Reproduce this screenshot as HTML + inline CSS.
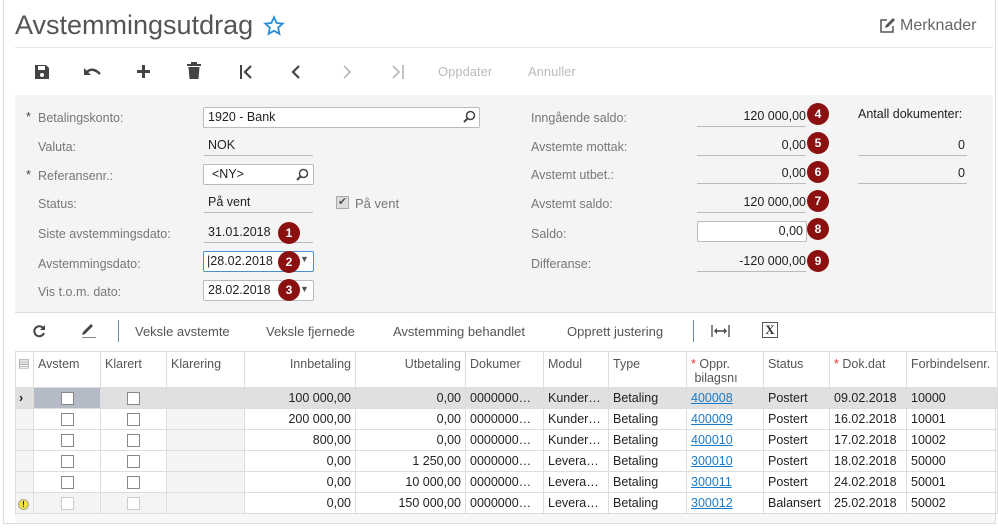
<!DOCTYPE html>
<html><head><meta charset="utf-8"><style>
*{box-sizing:border-box;margin:0;padding:0}
body{width:998px;height:528px;background:#fff;font-family:"Liberation Sans",sans-serif;font-size:12.5px;color:#222;position:relative;overflow:hidden}
.a{position:absolute;white-space:nowrap}
.lbl{color:#777;font-size:12.5px}
.val{border-bottom:1px solid #bbb;height:20px;line-height:18px}
.inp{background:#fff;border:1px solid #bbb;border-radius:2px;height:21px;line-height:19px;padding-left:4px}
.b{width:22px;height:22px;border-radius:50%;background:#8b1010;color:#fff;font-weight:bold;font-size:12px;text-align:center;line-height:22px}
.dis{color:#bbb}
table{border-collapse:collapse;position:absolute;left:15px;top:351px;width:982px;table-layout:fixed}
td,th{border:1px solid #ddd;height:21px;padding:0 4px;font-size:12.5px;white-space:nowrap;overflow:hidden}
th{font-weight:normal;color:#555;text-align:left;vertical-align:top;height:36px;padding-top:5px;line-height:14px}
td.r,th.r{text-align:right}
.cb{display:inline-block;width:13px;height:13px;border:1px solid #888;background:#fff;vertical-align:middle}
.cbd{border-color:#ccc}
.lnk{color:#1a7bc9;text-decoration:underline}
tr.sel td{background:#e0e0e0}
.req{color:#e33}
.nav{position:absolute;font-size:17px;font-family:"DejaVu Sans",sans-serif;top:61px}
</style></head><body>
<div class="a" style="left:3px;top:0;width:1px;height:524px;background:#ddd"></div>
<div class="a" style="left:995px;top:0;width:1px;height:524px;background:#ddd"></div>
<div class="a" style="left:3px;top:523px;width:993px;height:1px;background:#ddd"></div>

<div class="a" style="left:15px;top:10px;font-size:27px;color:#555;font-family:'Liberation Sans',sans-serif">Avstemmingsutdrag</div>
<svg class="a" style="left:263px;top:15px" width="22" height="22" viewBox="0 0 24 24"><path d="M12 2.5l2.9 6.2 6.6.7-5 4.5 1.4 6.6L12 17.2l-5.9 3.3 1.4-6.6-5-4.5 6.6-.7z" fill="none" stroke="#2a8fd8" stroke-width="2"/></svg>
<svg class="a" style="left:878px;top:17px" width="18" height="18" viewBox="0 0 18 18"><path d="M9 3H3v12h12V9" fill="none" stroke="#555" stroke-width="1.5"/><path d="M7 11l1-3 7-7 2 2-7 7z" fill="#555"/></svg>
<div class="a" style="left:900px;top:17px;font-size:16px;color:#666">Merknader</div>
<div class="a" style="left:15px;top:47px;width:978px;height:1px;background:#e6e6e6"></div>

<!-- toolbar -->
<svg class="a" style="left:34px;top:64px" width="16" height="16" viewBox="0 0 16 16"><path d="M1 1h11l3 3v11H1z" fill="#444"/><rect x="4" y="2" width="7" height="4" fill="#fff"/><circle cx="8" cy="11" r="2" fill="#fff"/></svg>
<svg class="a" style="left:84px;top:65px" width="18" height="14" viewBox="0 0 18 14"><path d="M2 8 Q8 1 16 9" fill="none" stroke="#444" stroke-width="2.4"/><path d="M0 3v7h7z" fill="#444"/></svg>
<svg class="a" style="left:136px;top:64px" width="15" height="15" viewBox="0 0 15 15"><path d="M7.5 1v13M1 7.5h13" stroke="#444" stroke-width="3"/></svg>
<svg class="a" style="left:186px;top:62px" width="16" height="18" viewBox="0 0 16 18"><rect x="1" y="2" width="14" height="2" fill="#444"/><rect x="5" y="0" width="6" height="2" fill="#444"/><path d="M2.5 5h11l-1 12h-9z" fill="#444"/></svg>
<svg class="a" style="left:239px;top:64px" width="14" height="16" viewBox="0 0 14 16"><path d="M2 1v14" stroke="#444" stroke-width="2"/><path d="M12 2L6 8l6 6" fill="none" stroke="#444" stroke-width="2.2"/></svg>
<svg class="a" style="left:291px;top:64px" width="10" height="16" viewBox="0 0 10 16"><path d="M8 2L2 8l6 6" fill="none" stroke="#444" stroke-width="2.2"/></svg>
<svg class="a" style="left:342px;top:64px" width="10" height="16" viewBox="0 0 10 16"><path d="M2 2l6 6-6 6" fill="none" stroke="#bbb" stroke-width="1.8"/></svg>
<svg class="a" style="left:391px;top:64px" width="14" height="16" viewBox="0 0 14 16"><path d="M2 2l6 6-6 6" fill="none" stroke="#bbb" stroke-width="1.8"/><path d="M12 1v14" stroke="#bbb" stroke-width="1.8"/></svg>
<div class="a dis" style="left:438px;top:64px;font-size:13px">Oppdater</div>
<div class="a dis" style="left:528px;top:64px;font-size:13px">Annuller</div>

<!-- form panel -->
<div class="a" style="left:15px;top:95px;width:978px;height:217px;background:#f4f4f4"></div>
<div class="a" style="left:26px;top:110px;color:#444">*</div>
<div class="a lbl" style="left:38px;top:111px">Betalingskonto:</div>
<div class="a inp" style="left:203px;top:107px;width:277px">1920 - Bank</div>
<svg class="a" style="left:463px;top:110px" width="13" height="13" viewBox="0 0 13 13"><circle cx="7.5" cy="5.5" r="4" fill="none" stroke="#444" stroke-width="1.5"/><path d="M4.5 8.5L1 12" stroke="#444" stroke-width="2"/></svg>
<div class="a lbl" style="left:38px;top:140px">Valuta:</div>
<div class="a val" style="left:204px;top:136px;width:109px;padding-left:4px">NOK</div>
<div class="a" style="left:26px;top:168px;color:#444">*</div>
<div class="a lbl" style="left:38px;top:169px">Referansenr.:</div>
<div class="a inp" style="left:203px;top:164px;width:111px;padding-left:8px">&lt;NY&gt;</div>
<svg class="a" style="left:296px;top:168px" width="13" height="13" viewBox="0 0 13 13"><circle cx="7.5" cy="5.5" r="4" fill="none" stroke="#444" stroke-width="1.5"/><path d="M4.5 8.5L1 12" stroke="#444" stroke-width="2"/></svg>
<div class="a lbl" style="left:38px;top:197px">Status:</div>
<div class="a val" style="left:204px;top:193px;width:109px;padding-left:4px">På vent</div>
<div class="a" style="left:336px;top:196px;width:13px;height:13px;border:1px solid #aaa;background:#ddd;font-size:11px;line-height:11px;text-align:center;color:#555">✔</div>
<div class="a lbl" style="left:355px;top:196px;font-size:13px">På vent</div>
<div class="a lbl" style="left:38px;top:227px">Siste avstemmingsdato:</div>
<div class="a val" style="left:204px;top:223px;width:109px;padding-left:4px">31.01.2018</div>
<div class="a b" style="left:278px;top:222px">1</div>
<div class="a lbl" style="left:38px;top:257px">Avstemmingsdato:</div>
<div class="a inp" style="left:203px;top:251px;width:111px;border-color:#4a8fd0;padding-left:3px">|28.02.2018</div>
<div class="a" style="left:300px;top:254px;font-size:9px;color:#555">▼</div>
<div class="a b" style="left:278px;top:251px">2</div>
<div class="a lbl" style="left:38px;top:285px">Vis t.o.m. dato:</div>
<div class="a inp" style="left:203px;top:280px;width:111px">28.02.2018</div>
<div class="a" style="left:300px;top:284px;font-size:9px;color:#555">▼</div>
<div class="a b" style="left:278px;top:279px">3</div>

<div class="a lbl" style="left:531px;top:111px">Inngående saldo:</div>
<div class="a val" style="left:697px;top:107px;width:109px;text-align:right">120 000,00</div>
<div class="a b" style="left:807px;top:103px">4</div>
<div class="a lbl" style="left:531px;top:140px">Avstemte mottak:</div>
<div class="a val" style="left:697px;top:136px;width:109px;text-align:right">0,00</div>
<div class="a b" style="left:807px;top:132px">5</div>
<div class="a lbl" style="left:531px;top:168px">Avstemt utbet.:</div>
<div class="a val" style="left:697px;top:164px;width:109px;text-align:right">0,00</div>
<div class="a b" style="left:807px;top:161px">6</div>
<div class="a lbl" style="left:531px;top:197px">Avstemt saldo:</div>
<div class="a val" style="left:697px;top:193px;width:109px;text-align:right">120 000,00</div>
<div class="a b" style="left:807px;top:190px">7</div>
<div class="a lbl" style="left:531px;top:227px">Saldo:</div>
<div class="a inp" style="left:697px;top:221px;width:110px;text-align:right;padding-right:3px">0,00</div>
<div class="a b" style="left:807px;top:218px">8</div>
<div class="a lbl" style="left:531px;top:257px">Differanse:</div>
<div class="a val" style="left:697px;top:252px;width:109px;text-align:right">-120 000,00</div>
<div class="a b" style="left:807px;top:250px">9</div>
<div class="a" style="left:858px;top:107px">Antall dokumenter:</div>
<div class="a val" style="left:858px;top:136px;width:109px;text-align:right;padding-right:2px">0</div>
<div class="a val" style="left:858px;top:164px;width:109px;text-align:right;padding-right:2px">0</div>

<!-- grid toolbar -->
<div class="a" style="left:15px;top:312px;width:980px;height:1px;background:#ddd"></div>
<svg class="a" style="left:32px;top:324px" width="14" height="14" viewBox="0 0 14 14"><path d="M11.5 4.5A5 5 0 1 0 12 9" fill="none" stroke="#444" stroke-width="2"/><path d="M13 1v5H8z" fill="#444"/></svg>
<svg class="a" style="left:80px;top:322px" width="17" height="17" viewBox="0 0 17 17"><path d="M2 13l1-3 8-8 2 2-8 8z" fill="#444"/><rect x="2" y="15" width="14" height="1" fill="#888"/></svg>
<div class="a" style="left:118px;top:320px;width:1px;height:22px;background:#6a8ab0"></div>
<div class="a" style="left:135px;top:324px;color:#555;font-size:13px">Veksle avstemte</div>
<div class="a" style="left:266px;top:324px;color:#555;font-size:13px">Veksle fjernede</div>
<div class="a" style="left:393px;top:324px;color:#555;font-size:13px">Avstemming behandlet</div>
<div class="a" style="left:567px;top:324px;color:#555;font-size:13px">Opprett justering</div>
<div class="a" style="left:693px;top:320px;width:1px;height:22px;background:#6a8ab0"></div>
<svg class="a" style="left:711px;top:324px" width="19" height="14" viewBox="0 0 19 14"><path d="M1 1v12M18 1v12" stroke="#444" stroke-width="1.3"/><path d="M4 7h11" stroke="#444" stroke-width="1.5"/><path d="M3 7l3-3v6zM16 7l-3-3v6z" fill="#444"/></svg>
<div class="a" style="left:762px;top:322px;width:16px;height:16px;border:1px solid #555;font-size:13px;font-weight:bold;line-height:14px;text-align:center;color:#333;font-family:'Liberation Serif',serif">X</div>

<table>
<colgroup><col style="width:18px"><col style="width:67px"><col style="width:66px"><col style="width:78px"><col style="width:111px"><col style="width:110px"><col style="width:78px"><col style="width:65px"><col style="width:78px"><col style="width:77px"><col style="width:66px"><col style="width:77px"><col style="width:91px"></colgroup>
<tr style="background:#fff"><th style="padding:4px 2px;color:#999">▤</th><th>Avstem</th><th>Klarert</th><th>Klarering</th><th class="r">Innbetaling</th><th class="r">Utbetaling</th><th>Dokumer</th><th>Modul</th><th>Type</th><th><span class="req">*</span> Oppr.<br>&nbsp;bilagsnı</th><th>Status</th><th><span class="req">*</span> Dok.dat</th><th>Forbindelsenr.</th></tr>
<tr class="sel"><td style="font-weight:bold;padding:0 3px">›</td><td style="text-align:center;background:#b4bac6"><span class="cb"></span></td><td style="text-align:center"><span class="cb"></span></td><td></td><td class="r">100 000,00</td><td class="r">0,00</td><td>0000000…</td><td>Kunder…</td><td>Betaling</td><td><span class="lnk">400008</span></td><td>Postert</td><td>09.02.2018</td><td>10000</td></tr>
<tr><td style="background:#f4f4f4"></td><td style="text-align:center"><span class="cb"></span></td><td style="text-align:center"><span class="cb"></span></td><td style="background:#f4f4f4"></td><td class="r">200 000,00</td><td class="r">0,00</td><td>0000000…</td><td>Kunder…</td><td>Betaling</td><td><span class="lnk">400009</span></td><td>Postert</td><td>16.02.2018</td><td>10001</td></tr>
<tr><td style="background:#f4f4f4"></td><td style="text-align:center"><span class="cb"></span></td><td style="text-align:center"><span class="cb"></span></td><td style="background:#f4f4f4"></td><td class="r">800,00</td><td class="r">0,00</td><td>0000000…</td><td>Kunder…</td><td>Betaling</td><td><span class="lnk">400010</span></td><td>Postert</td><td>17.02.2018</td><td>10002</td></tr>
<tr><td style="background:#f4f4f4"></td><td style="text-align:center"><span class="cb"></span></td><td style="text-align:center"><span class="cb"></span></td><td style="background:#f4f4f4"></td><td class="r">0,00</td><td class="r">1 250,00</td><td>0000000…</td><td>Levera…</td><td>Betaling</td><td><span class="lnk">300010</span></td><td>Postert</td><td>18.02.2018</td><td>50000</td></tr>
<tr><td style="background:#f4f4f4"></td><td style="text-align:center"><span class="cb"></span></td><td style="text-align:center"><span class="cb"></span></td><td style="background:#f4f4f4"></td><td class="r">0,00</td><td class="r">10 000,00</td><td>0000000…</td><td>Levera…</td><td>Betaling</td><td><span class="lnk">300011</span></td><td>Postert</td><td>24.02.2018</td><td>50001</td></tr>
<tr><td style="background:#f4f4f4;padding:0 2px"><span style="display:inline-block;width:11px;height:11px;border-radius:50%;background:#f0e040;border:1px solid #aa9;font-size:8px;line-height:9px;text-align:center;font-weight:bold">!</span></td><td style="text-align:center;background:#f4f4f4"><span class="cb cbd"></span></td><td style="text-align:center;background:#f4f4f4"><span class="cb cbd"></span></td><td style="background:#f4f4f4"></td><td class="r">0,00</td><td class="r">150 000,00</td><td>0000000…</td><td>Levera…</td><td>Betaling</td><td><span class="lnk">300012</span></td><td>Balansert</td><td>25.02.2018</td><td>50002</td></tr>
</table>
<div class="a" style="left:15px;top:514px;width:980px;height:9px;background:#f7f7f7"></div>
</body></html>
